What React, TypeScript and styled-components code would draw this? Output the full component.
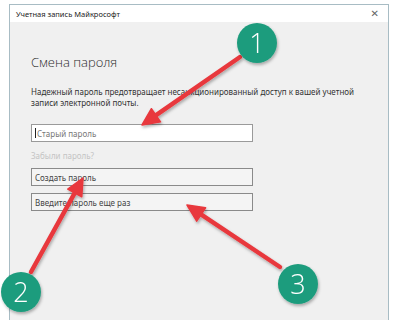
import React from "react";
import styled, {createGlobalStyle} from "styled-components";

const GlobalStyle = createGlobalStyle`
    html, body {
        margin: 0;
        padding: 0;
        height: 100%;
        overflow: hidden;
        background: #ffffff;
        font-family: "Noto Sans", "Open Sans", sans-serif;
    }
`

const Page = styled.div`
    position: relative;
    width: 397px;
    height: 320px;
    overflow: hidden;
    padding: 4px 0 0 9px;
    box-sizing: border-box;
`

const Window = styled.div`
    width: 380px;
    height: 340px;
    border: 1px solid #a8bcc4;
    box-sizing: border-box;
    background: #f0f0f0;
    display: flex;
    flex-direction: column;
`

const TitleBar = styled.div`
    height: 17px;
    background: #ffffff;
    display: flex;
    align-items: center;
    justify-content: space-between;
    padding: 0 9px 0 6px;
    font-size: 7.5px;
    color: #222;
`

const CloseIcon = styled.span`
    font-size: 10px;
    color: #666;
    font-family: "DejaVu Sans", sans-serif;
    line-height: 1;
`

const Content = styled.div`
    padding: 30px 0 0 21px;
    display: flex;
    flex-direction: column;
`

const Heading = styled.h1`
    margin: 0;
    font-size: 13px;
    font-weight: 300;
    line-height: 20px;
    color: #2b2b2b;
    font-family: "Open Sans", "Noto Sans", sans-serif;
`

const Description = styled.p`
    margin: 15px 0 0;
    font-size: 8px;
    line-height: 10.5px;
    color: #333;
    width: 340px;
`

const Field = styled.div<{ $filled?: boolean; $gap: number }>`
    margin-top: ${p => p.$gap}px;
    width: 222px;
    height: 18px;
    box-sizing: border-box;
    border: 1px solid ${p => p.$filled ? "#8a8a8a" : "#9a9a9a"};
    background: ${p => p.$filled ? "#f4f4f4" : "#ffffff"};
    display: flex;
    align-items: center;
    padding-left: 3px;
    font-size: 8px;
    color: ${p => p.$filled ? "#444" : "#777"};
`

const Caret = styled.span`
    width: 1px;
    height: 10px;
    background: #222;
    margin-right: 1px;
`

const ForgotLink = styled.div`
    margin-top: 9px;
    font-size: 8px;
    line-height: 10px;
    color: #c4c4c4;
`

const Overlay = styled.svg`
    position: absolute;
    left: 0;
    top: 0;
    pointer-events: none;
`

const arrows = [
    {x1: 240, y1: 57, x2: 142, y2: 125},
    {x1: 31, y1: 272, x2: 83, y2: 178},
    {x1: 280, y1: 267, x2: 187, y2: 205},
]

const badges = [
    {cx: 257, cy: 43, n: "1"},
    {cx: 21, cy: 292, n: "2"},
    {cx: 298, cy: 284, n: "3"},
]

const Arrow = ({x1, y1, x2, y2}: { x1: number, y1: number, x2: number, y2: number }) => {
    const dx = x2 - x1
    const dy = y2 - y1
    const len = Math.sqrt(dx * dx + dy * dy)
    const ux = dx / len
    const uy = dy / len
    const head = 17
    const bx = x2 - ux * head
    const by = y2 - uy * head
    const w = 8
    const pts = `${x2},${y2} ${bx - uy * w},${by + ux * w} ${bx + uy * w},${by - ux * w}`
    return (
        <g>
            <line x1={x1} y1={y1} x2={bx + ux * 2} y2={by + uy * 2} stroke="#e8383d" strokeWidth={4.5} strokeLinecap="round"/>
            <polygon points={pts} fill="#e8383d" stroke="#e8383d" strokeWidth={1.5} strokeLinejoin="round"/>
        </g>
    )
}

export default function App() {
    return (
        <Page>
            <GlobalStyle/>
            <Window>
                <TitleBar>
                    <span>Учетная запись Майкрософт</span>
                    <CloseIcon>✕</CloseIcon>
                </TitleBar>
                <Content>
                    <Heading>Смена пароля</Heading>
                    <Description>
                        Надежный пароль предотвращает несанкционированный доступ к вашей учетной записи электронной почты.
                    </Description>
                    <Field $gap={16}><Caret/>Старый пароль</Field>
                    <ForgotLink>Забыли пароль?</ForgotLink>
                    <Field $filled $gap={7}>Создать пароль</Field>
                    <Field $filled $gap={7}>Введите пароль еще раз</Field>
                </Content>
            </Window>
            <Overlay width={397} height={320} viewBox="0 0 397 320">
                <defs>
                    <filter id="shadow" x="-30%" y="-30%" width="160%" height="160%">
                        <feDropShadow dx="1" dy="2" stdDeviation="1.5" floodColor="#000" floodOpacity="0.3"/>
                    </filter>
                </defs>
                <g filter="url(#shadow)">
                    {arrows.map((a, i) => <Arrow key={i} {...a}/>)}
                </g>
                {badges.map(b => (
                    <g key={b.n} filter="url(#shadow)">
                        <circle cx={b.cx} cy={b.cy} r={20} fill="#1f9c7d"/>
                        <text x={b.cx} y={b.cy + 9.5} textAnchor="middle" fontSize={27} fill="#ffffff"
                              fontFamily="'Open Sans', 'Noto Sans', sans-serif" fontWeight={300}>{b.n}</text>
                    </g>
                ))}
            </Overlay>
        </Page>
    )
}
